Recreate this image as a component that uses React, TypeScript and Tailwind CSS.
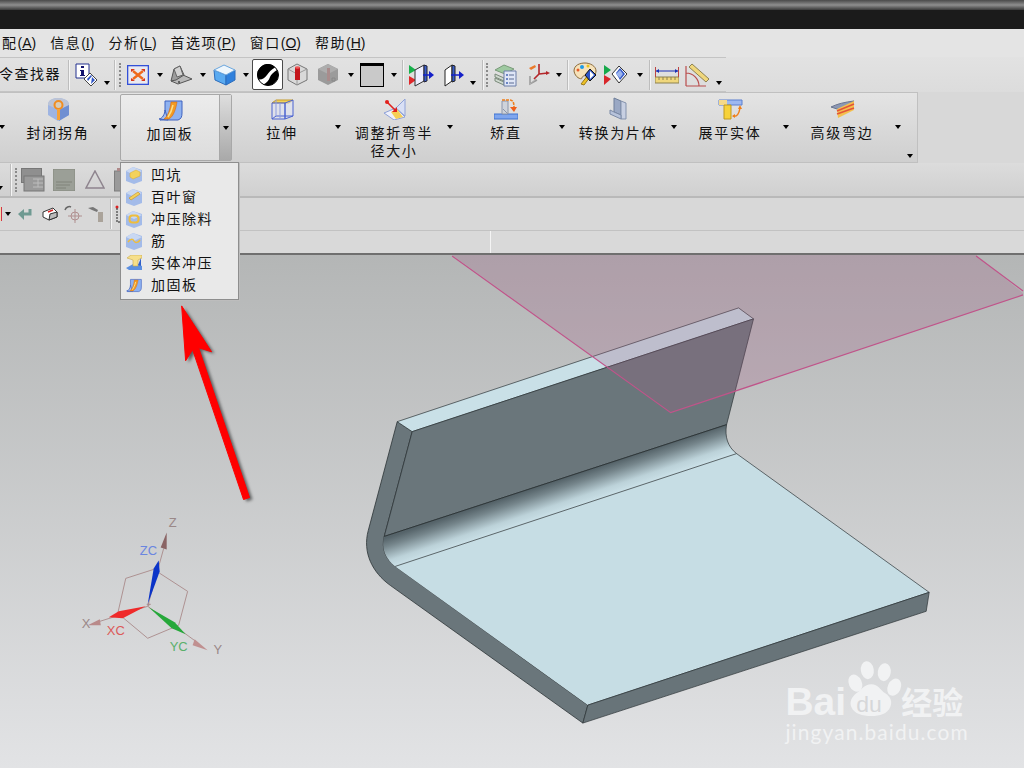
import type { ReactNode } from "react"

type P = { className?: string }

function Svg({ w, h, vb, className = "", children }: { w: number; h: number; vb?: string; className?: string; children: ReactNode }) {
  return (
    <svg width={w} height={h} viewBox={vb ?? `0 0 ${w} ${h}`} className={`shrink-0 ${className}`}>
      {children}
    </svg>
  )
}

function Arrow({ className = "" }: P) {
  return <div className={`w-0 h-0 shrink-0 border-x-[3.5px] border-x-transparent border-t-[4px] border-t-black ${className}`} />
}

function Sep({ className = "" }: P) {
  return <div className={`w-[2px] h-[30px] shrink-0 bg-[#f4f4f4] border-l border-[#bdbdbd] ${className}`} />
}

function Grip({ className = "" }: P) {
  return <div className={`w-[2px] h-[24px] shrink-0 border-l-2 border-dotted border-[#8a8a8a] ${className}`} />
}

/* toolbar icons */
function InfoIcon({ className }: P) {
  return (
    <Svg w={23} h={24} className={className}>
      <path d="M1 1h13v14H1z" fill="#fff" stroke="#23308f" />
      <path d="M6 3h3v2H6zM5 7h4v5h1v1H5v-1h1V8H5z" fill="#12126e" />
      <path d="M15 10l7 7-6 6-7-7z" fill="#fff" stroke="#444" />
      <path d="M12 16l4-4 1 1-4 5zM17 14l3 3-4 4z" fill="#2f55c4" />
    </Svg>
  )
}
function FitIcon({ className }: P) {
  return (
    <Svg w={22} h={20} className={className}>
      <rect x="0.5" y="0.5" width="21" height="19" fill="#e9e9ef" stroke="#3350d8" strokeWidth="1.6" />
      <path d="M6 6l10 8M16 6L6 14" stroke="#ef6a1c" strokeWidth="2.4" />
      <path d="M4 4h4l-4 3zM18 4h-4l4 3zM4 16h4l-4-3zM18 16h-4l4-3z" fill="#d8341a" />
    </Svg>
  )
}
function ShadeIcon({ className }: P) {
  return (
    <Svg w={23} h={21} className={className}>
      <path d="M1 17l7 3 14-5-9-4z" fill="#b9b9b9" stroke="#555" />
      <path d="M1 17l3-12 6-3 4 9-8 5z" fill="#9c9c9c" stroke="#555" />
      <path d="M4 5l6-3 3 9-6 2z" fill="#d2d2d2" stroke="#666" />
      <circle cx="9" cy="18" r="1" fill="#444" />
    </Svg>
  )
}
function CubeIcon({ className }: P) {
  return (
    <Svg w={23} h={23} className={className}>
      <path d="M1 7l12 5v10L2 17z" fill="#5aaaf0" stroke="#2d6dbc" />
      <path d="M13 12l9-5v10l-9 5z" fill="#2f80dc" stroke="#2d6dbc" />
      <path d="M1 7l10-5 11 5-9 5z" fill="#eef6fc" stroke="#6aa6de" />
    </Svg>
  )
}
function ShadeActive({ className }: P) {
  return (
    <div className={`w-[31px] h-[31px] shrink-0 bg-white border border-[#4a4a4a] rounded-[2px] flex items-center justify-center ${className}`}>
      <Svg w={22} h={22}>
        <circle cx="11" cy="11" r="10.500" fill="#fff" stroke="#000" />
        <path d="M15 1A10.500 10.500 0 0 0 1.500 15.500C5 16 8 14 10 11C12 8 14 6 18 3.500A10.500 10.500 0 0 0 15 1Z" fill="#000" />
        <path d="M20 6A10.500 10.500 0 0 1 6.500 20.500C10 19 12 16 13 13C14 10 17 8 20 6Z" fill="#000" />
      </Svg>
    </div>
  )
}
function RedCyl({ className }: P) {
  return (
    <Svg w={21} h={23} className={className}>
      <path d="M10 1l10 5v11l-10 5L1 17V6z" fill="#d9d9d9" stroke="#777" />
      <path d="M1 6l9 5 10-5M10 11v11" fill="none" stroke="#9a9a9a" />
      <rect x="8" y="4" width="5" height="13" fill="#c4161c" />
      <ellipse cx="10.500" cy="4.500" rx="2.500" ry="1.300" fill="#ef5a5a" />
    </Svg>
  )
}
function GreyCube({ className }: P) {
  return (
    <Svg w={21} h={23} className={className}>
      <path d="M10 1l10 5v11l-10 5L0 17V6z" fill="#9b9b9b" />
      <path d="M0 6l10 5 10-5-10-5z" fill="#adadad" />
      <rect x="9" y="5" width="3" height="13" fill="#a98c8c" />
      <path d="M14 15h3v3h-3z" fill="none" stroke="#888" />
    </Svg>
  )
}
function Panel({ className }: P) {
  return (
    <div className={`w-[24px] h-[24px] shrink-0 bg-[#c9c9c9] border border-black border-t-[3px] ${className}`} />
  )
}
function ArrowsPlane({ className }: P) {
  return (
    <Svg w={25} h={24} className={className}>
      <path d="M0 2v9l7-4z" fill="#17b04a" />
      <path d="M0 13v9l7-5z" fill="#e0262a" />
      <path d="M6 7l9-5v16l-9 5z" fill="#eef" stroke="#333" />
      <path d="M15 2l3 1v15l-3 1z" fill="#3a5ec9" stroke="#223" />
      <path d="M14 12h7" stroke="#1520c8" strokeWidth="1.500" />
      <path d="M20 8l5 4-5 4z" fill="#1520c8" />
    </Svg>
  )
}
function PlaneArrow({ className }: P) {
  return (
    <Svg w={21} h={24} className={className}>
      <path d="M1 7l7-5v16l-7 5z" fill="#fff" stroke="#222" />
      <path d="M8 2l3 1v15l-3 1z" fill="#3a5ec9" stroke="#222" />
      <path d="M7 12h9" stroke="#1520c8" strokeWidth="1.500" />
      <path d="M15 8l5 4-5 4z" fill="#1520c8" />
    </Svg>
  )
}
function LayersIcon({ className }: P) {
  return (
    <Svg w={23} h={24} className={className}>
      <path d="M1 7l9-5 10 4-9 5z" fill="#9ec9a0" stroke="#7a9a7a" />
      <path d="M1 11l9 4v3l-9-4zM1 15l9 4v3l-9-4z" fill="#cfd9cf" stroke="#7b8a7b" />
      <path d="M10 8h12v15H10z" fill="#dfe6f6" stroke="#6c7fa8" />
      <path d="M12 11h2v2h-2zM12 15h2v2h-2zM12 19h2v2h-2z" fill="#6c86c4" />
      <path d="M15 12h5M15 16h5M15 20h5" stroke="#5a6b92" />
    </Svg>
  )
}
function AxesIcon({ className }: P) {
  return (
    <Svg w={23} h={25} className={className}>
      <path d="M3 14v8l7-4" fill="none" stroke="#999" strokeWidth="1.500" />
      <path d="M3 22l6-5" stroke="#b0b0b0" />
      <path d="M12 12V2M12 12l9-1M12 12l-5 5" stroke="#b3262a" strokeWidth="1.600" fill="none" />
      <path d="M2 6l6-3 1 2-5 3z" fill="#ea7a2a" />
      <path d="M19 9l4 2-4 2z" fill="#b3262a" />
    </Svg>
  )
}
function PaletteIcon({ className }: P) {
  return (
    <Svg w={24} h={25} className={className}>
      <path d="M1 9c0-6 6-8 11-8s11 3 11 8-5 6-8 5-6 0-6 2-7 0-8-7z" fill="#f6e2ba" stroke="#8a6a3a" />
      <circle cx="9" cy="5" r="2" fill="#1f9be6" />
      <circle cx="15" cy="4" r="1.500" fill="#e8c21c" />
      <circle cx="5" cy="8" r="1.500" fill="#ea5a2a" />
      <path d="M8 22l7-9 2 2-6 8z" fill="#eec225" stroke="#9a7a1a" />
      <path d="M17 7l6 6-6 6-5-6z" fill="#2f55c4" stroke="#111" />
      <path d="M17 9l4 4-4 4z" fill="#fff" />
    </Svg>
  )
}
function PlayDiamond({ className }: P) {
  return (
    <Svg w={23} h={21} className={className}>
      <path d="M0 1l7 5-7 5z" fill="#17a84a" />
      <path d="M0 11l7 4-7 6z" fill="#d8262a" />
      <path d="M15 2l8 8-8 9-7-9z" fill="#fff" stroke="#333" />
      <path d="M12 9l4-5 5 6-5 6z" fill="#2f55c4" />
      <path d="M12 10l4-4 3 4-3 4z" fill="#9db5ee" />
    </Svg>
  )
}
function RulerIcon({ className }: P) {
  return (
    <Svg w={24} h={20} className={className}>
      <path d="M0 12h24v6H0z" fill="#f0d77c" stroke="#8d8251" />
      <path d="M4 12v3M8 12v3M12 12v3M16 12v3M20 12v3" stroke="#8d8251" />
      <path d="M1 6h22" stroke="#1a2fb5" />
      <path d="M1 6l3-2v4zM23 6l-3-2v4z" fill="#1a2fb5" />
      <path d="M.5 2v10M23.500 2v10" stroke="#b44" />
    </Svg>
  )
}
function AngleIcon({ className }: P) {
  return (
    <Svg w={24} h={24} className={className}>
      <path d="M1 23V3M1 23h20M1 10a13 13 0 0 1 13 13" fill="none" stroke="#b94c4c" strokeWidth="1.200" />
      <path d="M7 1l17 15-3 3L4 4z" fill="#f0d77c" stroke="#8d8251" />
    </Svg>
  )
}

/* ribbon icons */
function CornerIcon({ className }: P) {
  return (
    <Svg w={23} h={23} className={className}>
      <path d="M11 0c5 0 11 2 11 7v10l-11 6L1 17V7c0-5 5-7 10-7z" fill="#9eb4e2" />
      <path d="M1 7c0-5 5-7 10-7s11 2 11 7l-10 5z" fill="#bcc4d6" />
      <path d="M12 12l10-5v10l-10 6z" fill="#6f8fd2" />
      <circle cx="11.500" cy="7" r="4" fill="#d8ccb8" stroke="#f08c20" strokeWidth="2" />
      <rect x="10" y="11" width="3" height="11" fill="#f5a23a" />
    </Svg>
  )
}
function GussetIcon({ className, w = 25, h = 21 }: P & { w?: number; h?: number }) {
  return (
    <Svg w={w} h={h} vb="0 0 25 21" className={className}>
      <path d="M7 1h17v12c0 4-1 6-4 7H2c3-1 5-4 5-8z" fill="#8fb2f0" stroke="#3f62c0" />
      <path d="M1 19c3 0 6-5 6-9l3 10z" fill="#a5bff0" stroke="#3f62c0" />
      <path d="M13 2h6c-1 6-3 14-8 17H6c4-3 6-9 7-17z" fill="#f39a22" stroke="#d0681a" strokeWidth="0.600" />
      <path d="M15 5c-1 5-3 9-5 12" stroke="#fbe08a" strokeWidth="1.500" fill="none" />
    </Svg>
  )
}
function ExtrudeIcon({ className }: P) {
  return (
    <Svg w={23} h={21} className={className}>
      <path d="M1 4l4-3h17l-4 3z" fill="#f2d35a" stroke="#c59a2a" />
      <path d="M1 4h13v16H1zM14 4l8-3v16l-8 3zM1 20l4-3h17" fill="#dfe4f5" fillOpacity="0.5" stroke="#4a62d0" />
      <path d="M5 1v16M9 4v16" stroke="#8d9de0" />
    </Svg>
  )
}
function ResizeIcon({ className }: P) {
  return (
    <Svg w={23} h={22} className={className}>
      <path d="M1 15l12-5 9 9-11 3z" fill="#eef0fb" stroke="#8fa2d8" />
      <path d="M13 10l9-9v17l-9-8z" fill="#d9e0f5" stroke="#8fa2d8" />
      <path d="M8 14l6-3 6 8-7 2z" fill="#f5cf55" />
      <path d="M4 4l9 9" stroke="#e2211c" strokeWidth="1.600" />
      <circle cx="4" cy="4" r="2" fill="#e2211c" />
      <path d="M14 9v5h-5z" fill="#e2211c" />
    </Svg>
  )
}
function StraightenIcon({ className }: P) {
  return (
    <Svg w={24} h={22} className={className}>
      <path d="M0 16h24v5H0z" fill="#7fa6ee" stroke="#3f72d0" />
      <path d="M8 3h6v13H8z" fill="#cfd3da" stroke="#8c96aa" />
      <path d="M14 16L9 11" stroke="#8c96aa" />
      <path d="M8 2h8c3 0 4 3 4 7" fill="none" stroke="#ef7f1a" strokeWidth="1.600" strokeDasharray="3 1" />
      <path d="M16 9h7l-3 5z" fill="#ef5f1a" />
    </Svg>
  )
}
function SheetIcon({ className }: P) {
  return (
    <Svg w={19} h={24} className={className}>
      <path d="M5 1l7 3v14l-7-3z" fill="#9aa8c4" stroke="#6f7f9a" />
      <path d="M12 4l5 2v16h-5z" fill="#c8d0e2" stroke="#8593ac" />
      <path d="M1 13l4 2 7 3v4l-11-5z" fill="#b7c3db" stroke="#7b8aa6" />
    </Svg>
  )
}
function FlattenIcon({ className }: P) {
  return (
    <Svg w={25} h={21} className={className}>
      <path d="M1 1h23v5H1z" fill="#9db8f0" stroke="#5a7ed0" />
      <path d="M1 1h8v5H1z" fill="#f5d98a" />
      <path d="M6 6h7v14H6z" fill="#f7d23a" stroke="#c09a20" />
      <path d="M15 17c4 1 6-2 7-8" fill="none" stroke="#ef7f1a" strokeWidth="1.500" />
      <path d="M20 10l2-4 2 4zM17 15v4l-3-2z" fill="#ef7f1a" />
    </Svg>
  )
}
function AdvFlangeIcon({ className }: P) {
  return (
    <Svg w={25} h={19} className={className}>
      <path d="M1 7c6-3 14-5 23-6L10 10z" fill="#8c98b4" stroke="#6a7690" />
      <path d="M7 9l17-8v9L8 18z" fill="#f4c04e" />
      <path d="M7 11l17-7M7 14l17-6" stroke="#e2543a" strokeWidth="1.600" />
    </Svg>
  )
}

/* dropdown icons */
function HexIcon({ children }: { children: ReactNode }) {
  return (
    <Svg w={16} h={17}>
      <path d="M7 0l9 3v11l-8 3-8-3V4z" fill="#a3bbe9" />
      <path d="M7 0l-7 4 8 4 8-4z" fill="#c9d8f2" />
      {children}
    </Svg>
  )
}
function StampIcon() {
  return (
    <Svg w={16} h={16}>
      <path d="M0 13l9-5 7 3v4H3z" fill="#5c8fe0" />
      <path d="M1 3l4-3h11v3l-4 2v6H7V5z" fill="#f6df8a" stroke="#c9a94a" strokeWidth="0.600" />
      <path d="M12 10l3-7v8z" fill="#2f5fc9" />
    </Svg>
  )
}

const menus: [string, string][] = [["配", "A"], ["信息", "I"], ["分析", "L"], ["首选项", "P"], ["窗口", "O"], ["帮助", "H"]]

const ribbon: { label: ReactNode; icon: ReactNode }[] = [
  { label: "封闭拐角", icon: <CornerIcon /> },
  { label: "加固板", icon: <GussetIcon /> },
  { label: "拉伸", icon: <ExtrudeIcon /> },
  { label: <>调整折弯半<br />径大小</>, icon: <ResizeIcon /> },
  { label: "矫直", icon: <StraightenIcon /> },
  { label: "转换为片体", icon: <SheetIcon /> },
  { label: "展平实体", icon: <FlattenIcon /> },
  { label: "高级弯边", icon: <AdvFlangeIcon /> },
]

const dropdown: { label: string; icon: ReactNode }[] = [
  { label: "凹坑", icon: <HexIcon><path d="M4 6l6-3 4 2v4l-7 3-3-2z" fill="#f3d25c" stroke="#d9a92a" strokeWidth="0.500" /></HexIcon> },
  { label: "百叶窗", icon: <HexIcon><path d="M3 9l9-6 2 2-9 6z" fill="#f3d25c" stroke="#c98f1f" strokeWidth="0.600" /></HexIcon> },
  { label: "冲压除料", icon: <HexIcon><rect x="3.500" y="4.500" width="9" height="7" rx="3" fill="none" stroke="#eebd3c" strokeWidth="2" /></HexIcon> },
  { label: "筋", icon: <HexIcon><path d="M2 9c3-4 5-3 6-1s4 2 6-1" fill="none" stroke="#eebd3c" strokeWidth="1.500" /></HexIcon> },
  { label: "实体冲压", icon: <StampIcon /> },
  { label: "加固板", icon: <GussetIcon w={16} h={15} /> },
]

function Scene() {
  return (
    <svg viewBox="0 254 1024 514" className="block w-full h-full">
      <defs>
        <linearGradient id="bend" gradientUnits="userSpaceOnUse" x1="556" y1="481" x2="566" y2="511">
          <stop offset="0" stopColor="#56646a" />
          <stop offset="0.25" stopColor="#75858b" />
          <stop offset="0.7" stopColor="#bcd2d9" />
          <stop offset="1" stopColor="#cde3ea" />
        </linearGradient>
      </defs>

      {/* bent sheet */}
      <path d="M397 421L412 431L384 536C381 548 385 558 395 566L588 705L583 723L390 585C372 572 362 552 368 530Z" fill="#6a767b" stroke="#2b3235" strokeWidth="0.800" strokeLinejoin="round" />
      <path d="M397 421L739 307L754 318L412 431Z" fill="#c9e0e7" stroke="#2b3235" strokeWidth="0.700" />
      <path d="M412 431L754 318L727 424L384 536Z" fill="#6a767b" stroke="#2b3235" strokeWidth="0.700" />
      <path d="M384 536L727 424C725 436 728 446 737 453L395 566C385 558 381 548 384 536Z" fill="url(#bend)" />
      <path d="M384 536L727 424" stroke="#2b3235" strokeWidth="0.900" />
      <path d="M737 453L930 592L588 705L395 566Z" fill="#c6dde4" />
      <path d="M395 566L737 453L930 592L588 705" fill="none" stroke="#2b3235" strokeWidth="0.700" />
      <path d="M727 424C725 436 728 446 737 453" fill="none" stroke="#2b3235" strokeWidth="0.700" />
      <path d="M588 705L930 592L927 611L583 723Z" fill="#687479" stroke="#2b3235" strokeWidth="0.700" strokeLinejoin="round" />

      {/* datum plane */}
      <path d="M452 254H977L1024 292V294L671 412Z" fill="#a06187" fillOpacity="0.263" />
      <path d="M452 255L671 412L1024 294M977 255L1024 290" fill="none" stroke="#c0548a" strokeWidth="1.200" />

      {/* csys */}
      <path d="M153 569L187 591L178 625L147 638L117 613L125 578Z" fill="none" stroke="#a98a8a" strokeWidth="0.900" />
      <path d="M147 606L163 548M147 606L96 622M147 606L195 641" stroke="#a98a8a" strokeWidth="0.900" />
      <path d="M147 604L153 568L158 560L159 571Z" fill="#0b34c8" />
      <path d="M145 606L118 611L108 617L122 618Z" fill="#ef2a2a" />
      <path d="M148 607L174 622L185 634L171 628Z" fill="#26a83a" />
      <path d="M166 532L160 547L166 549Z" fill="#8a6464" />
      <path d="M87 625L99 619L100 625Z" fill="#b98a8a" />
      <path d="M207 650L194 639L192 645Z" fill="#c09090" />
      <path d="M146 604h4M148 602v4" stroke="#a98a8a" />
      <g className="font-['Liberation_Sans',sans-serif] text-[13px]" fill="#9a8888">
        <text x="168" y="527">Z</text>
        <text x="139" y="555" fill="#6a86e0">ZC</text>
        <text x="81" y="628">X</text>
        <text x="106" y="635" fill="#dc5a5a">XC</text>
        <text x="169" y="651" fill="#5ab06a">YC</text>
        <text x="213" y="654">Y</text>
      </g>

      {/* red arrow */}
      <path d="M181 305L211 351L198 347L249 497L243 499L192 349L185 360Z" fill="#333" fillOpacity="0.7" transform="translate(3 2)" className="blur-[1.5px]" />
      <path d="M181 305L211 351L198 347L249 497L243 499L192 349L185 360Z" fill="#ff0000" stroke="#ff0000" strokeLinejoin="round" />

      {/* watermark */}
      <g fill="#f1f2f3">
        <ellipse cx="868" cy="670" rx="6.500" ry="9" transform="rotate(-8 868 670)" />
        <ellipse cx="885" cy="672" rx="6.500" ry="9" transform="rotate(8 885 672)" />
        <ellipse cx="856" cy="683" rx="6.500" ry="9" transform="rotate(-25 856 683)" />
        <ellipse cx="895" cy="687" rx="6.500" ry="9" transform="rotate(25 895 687)" />
        <path d="M872 684c7 0 9 6 14 9 6 4 7 9 5 14-3 7-10 9-19 9s-17-2-20-9c-2-5 0-10 5-14 5-3 8-9 15-9z" />
        <text x="786" y="715" className="font-['Liberation_Sans',sans-serif] font-bold text-[39px]">Bai</text>
        <text x="902" y="714" className="font-['Noto_Sans_CJK_SC',sans-serif] font-bold text-[31px]">经验</text>
        <text x="786" y="740" className="font-['Lato',sans-serif] text-[21px] tracking-[1.100px]">jingyan.baidu.com</text>
        <text x="857" y="712" fill="#d6d7d9" className="font-['Liberation_Sans',sans-serif] text-[23px]">du</text>
      </g>
    </svg>
  )
}

export default function App() {
  return (
    <div className="relative w-[1024px] h-[768px] overflow-hidden flex flex-col bg-[#d8d8d8] text-[14px] leading-[17px] text-[#111] font-['Liberation_Sans','Noto_Sans_CJK_SC',sans-serif]">
      {/* window title */}
      <div className="h-[10px] shrink-0 bg-gradient-to-b from-[#4a4a4a] via-[#8f8f8f] to-[#3a3a3a]" />
      <div className="h-[19px] shrink-0 bg-[#1b1b1b]" />

      {/* menu */}
      <div className="h-[28px] shrink-0 flex items-center bg-[#e4e4e4] pl-[2px] gap-[14px]">
        {menus.map(([name, key]) => (
          <span key={key} className="whitespace-nowrap">
            <span className="tracking-[1.500px]">{name}</span>(<span className="underline">{key}</span>)
          </span>
        ))}
      </div>

      {/* main toolbar */}
      <div className="h-[35px] shrink-0 flex items-center bg-gradient-to-b from-[#e2e2e2] to-[#dcdcdc]">
        <div className="w-[726px] h-full flex items-center border-y border-[#c4c4c4]">
          <div className="w-[68px] shrink-0 -ml-[1px] tracking-[1.500px] whitespace-nowrap">令查找器</div>
          <Sep className="ml-[1px]" />
          <InfoIcon className="ml-[5px]" />
          <Arrow className="ml-[6px] self-end mb-[6px]" />
          <Sep className="ml-[4px]" />
          <Grip className="ml-[3px]" />
          <FitIcon className="ml-[6px]" />
          <Arrow className="ml-[8px]" />
          <ShadeIcon className="ml-[7px]" />
          <Arrow className="ml-[7px]" />
          <CubeIcon className="ml-[7px]" />
          <Arrow className="ml-[7px]" />
          <ShadeActive className="ml-[3px]" />
          <RedCyl className="ml-[4px]" />
          <GreyCube className="ml-[10px]" />
          <Arrow className="ml-[9px]" />
          <Panel className="ml-[6px]" />
          <Arrow className="ml-[7px]" />
          <Sep className="ml-[5px]" />
          <ArrowsPlane className="ml-[5px]" />
          <PlaneArrow className="ml-[10px]" />
          <Arrow className="ml-[5px] self-end mb-[6px]" />
          <Sep className="ml-[6px]" />
          <Grip className="ml-[2px]" />
          <LayersIcon className="ml-[6px]" />
          <AxesIcon className="ml-[10px]" />
          <Arrow className="ml-[6px]" />
          <Sep className="ml-[5px]" />
          <PaletteIcon className="ml-[4px]" />
          <PlayDiamond className="ml-[7px]" />
          <Arrow className="ml-[10px]" />
          <Sep className="ml-[6px]" />
          <RulerIcon className="ml-[4px]" />
          <AngleIcon className="ml-[6px]" />
          <Arrow className="ml-[7px] self-end mb-[6px]" />
        </div>
      </div>

      {/* ribbon */}
      <div className="h-[71px] shrink-0 bg-[#d8d8d8]">
        <div className="relative w-[918px] h-full flex bg-gradient-to-b from-[#e4e4e4] to-[#cfcfcf] border-r border-b border-t border-[#c0c0c0]">
          <div className="w-[8px] shrink-0 relative overflow-hidden">
            <Arrow className="mt-[32px] -ml-[1px]" />
          </div>
          {ribbon.map((item, i) => (
            <div
              key={i}
              className={`w-[112px] shrink-0 flex ${i === 1 ? "border border-[#a8a8a8] rounded-[2px] bg-gradient-to-b from-[#ececec] to-[#dcdcdc] my-[1px]" : ""}`}
            >
              <div className={`flex-1 flex flex-col items-center ${i === 1 ? "pt-[3px]" : "pt-[4px]"}`}>
                <div className="h-[24px] flex items-center justify-center">{item.icon}</div>
                <div className="mt-[3px] text-center tracking-[1.700px] leading-[18px] whitespace-nowrap">{item.label}</div>
              </div>
              <div className={`w-[12px] shrink-0 flex justify-center ${i === 1 ? "pt-[31px] border-l border-[#a8a8a8] bg-gradient-to-b from-[#dedede] to-[#a9a9a9]" : "pt-[32px]"}`}>
                <Arrow />
              </div>
            </div>
          ))}
          <Arrow className="absolute right-[4px] bottom-[4px]" />
        </div>
      </div>

      {/* dimmed toolbar */}
      <div className="h-[35px] shrink-0 flex items-center bg-gradient-to-b from-[#dcdcdc] to-[#d0d0d0] border-b-2 border-[#b9b9b9]">
        <Arrow className="-ml-[3px] self-end mb-[6px]" />
        <Sep className="ml-[7px] h-[32px]" />
        <Grip className="ml-[3px]" />
        <Svg w={24} h={24} className="ml-[4px]">
          <rect x="0.500" y="0.500" width="20" height="14" fill="#8f8f8f" stroke="#777" />
          <rect x="3" y="8" width="20" height="15" fill="#9a9a9a" stroke="#777" />
          <path d="M12 11h10M12 15h10M12 19h10M17 11v8" stroke="#bdbdbd" />
        </Svg>
        <Svg w={22} h={22} className="ml-[8px]">
          <rect width="22" height="22" fill="#9b9f97" stroke="#85897f" />
          <path d="M3 13h16M3 16h14M3 19h10" stroke="#80837b" />
        </Svg>
        <Svg w={20} h={19} className="ml-[10px]">
          <path d="M10 1l9 17H1z" fill="none" stroke="#8e848e" strokeWidth="1.500" />
        </Svg>
        <Svg w={10} h={24} className="ml-[9px]">
          <rect x="0.500" y="3" width="9" height="20" fill="#9a9a9a" stroke="#7e7e7e" />
          <path d="M3 0h5v3H3z" fill="#b08a8a" />
        </Svg>
      </div>

      {/* second toolbar */}
      <div className="h-[33px] shrink-0 flex items-center bg-[#d8d8d8] border-b border-[#c2c2c2]">
        <div className="w-[2px] h-[14px] shrink-0 bg-[#f0d9b0] border-r border-[#d0344a]" />
        <Arrow className="ml-[3px]" />
        <Svg w={14} h={13} className="ml-[7px]">
          <path d="M12 1v5H5" fill="none" stroke="#6f9a92" strokeWidth="3" />
          <path d="M6 1L0 6l6 6z" fill="#6f9a92" />
        </Svg>
        <Svg w={16} h={14} className="ml-[10px]">
          <path d="M1 5l10-4 4 4v5l-8 3-6-3z" fill="#fff" stroke="#333" />
          <path d="M6 5l5-2" stroke="#d22" strokeWidth="1.500" />
          <path d="M8 7l7-2v5l-8 3z" fill="#bbb" stroke="#333" />
        </Svg>
        <Svg w={18} h={18} className="ml-[6px]">
          <path d="M1 5c1-3 4-4 6-3" fill="none" stroke="#666" strokeWidth="1.500" />
          <circle cx="11" cy="11" r="4" fill="none" stroke="#b09090" />
          <path d="M11 4v14M4 11h14" stroke="#b09090" />
        </Svg>
        <Svg w={16} h={16} className="ml-[6px]">
          <path d="M0 2l5-1 5 3-1 2-5-2z" fill="#777" />
          <rect x="10" y="6" width="5" height="10" fill="#aaa39a" />
        </Svg>
        <Sep className="ml-[6px] h-[28px]" />
        <Svg w={12} h={18} className="ml-[3px]">
          <circle cx="2" cy="2" r="1.500" fill="#d22" />
          <path d="M2 3v14h9" fill="none" stroke="#222" strokeDasharray="2 1" />
        </Svg>
      </div>

      {/* status row */}
      <div className="h-[24px] shrink-0 flex bg-[#d9d9d9] border-b-2 border-[#6f6f6f]">
        <div className="w-[491px] border-r border-[#f4f4f4]" />
      </div>

      {/* graphics window */}
      <div className="flex-1 min-h-0 bg-gradient-to-b from-[#b4b6b6] to-[#e2e3e5]">
        <Scene />
      </div>

      {/* open dropdown */}
      <div className="absolute left-[120px] top-[162px] w-[119px] h-[138px] py-[1px] bg-[#e9e9e9] border border-[#8e8e8e] shadow-[1px_1px_0_#bdbdbd]">
        {dropdown.map((d) => (
          <div key={d.label} className="h-[22px] flex items-center pl-[5px]">
            <div className="w-[16px] flex justify-center">{d.icon}</div>
            <span className="ml-[9px] tracking-[1.500px] whitespace-nowrap">{d.label}</span>
          </div>
        ))}
      </div>
    </div>
  )
}
